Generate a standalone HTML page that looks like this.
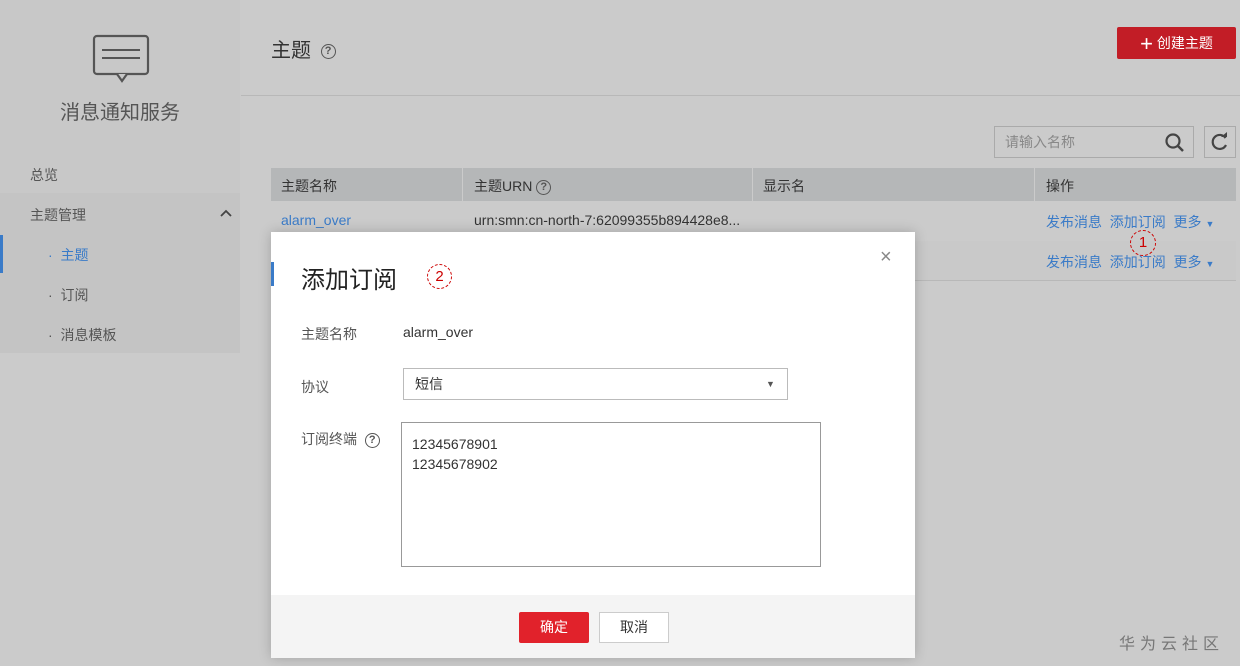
<!DOCTYPE html>
<html><head><meta charset="utf-8"><style>
*{margin:0;padding:0;box-sizing:border-box}
body{width:1240px;height:666px;overflow:hidden;background:#cbcbcb;font-family:"Liberation Sans","Noto Sans CJK SC",sans-serif;font-size:14px;color:#333;position:relative}
.a{position:absolute}
.blue{color:#3a7bc8}
.q{display:inline-block;width:15px;height:15px;border:1.6px solid #555;border-radius:50%;font-size:11px;line-height:12px;text-align:center;font-weight:bold;color:#555;vertical-align:middle}
</style></head><body>
<div class="a" style="left:0;top:0;width:240px;height:193px;background:#c8c8c8"></div>
<div class="a" style="left:0;top:193px;width:240px;height:160px;background:#c4c4c4"></div>
<svg class="a" style="left:92px;top:34px" width="58" height="50"><rect x="2" y="2" width="54" height="38" rx="3" fill="none" stroke="#555" stroke-width="2.2"/><path d="M10 16H48M10 24H48" stroke="#555" stroke-width="2"/><path d="M25 40L30 47L35 40" fill="#c8c8c8" stroke="#555" stroke-width="2.2"/></svg>
<div class="a" style="left:60px;top:96px;font-size:20px;color:#555">消息通知服务</div>
<div class="a" style="left:30px;top:165px;color:#555">总览</div>
<div class="a" style="left:30px;top:205px;color:#555">主题管理</div>
<svg class="a" style="left:219px;top:208px" width="14" height="10"><path d="M2 8L7 3L12 8" fill="none" stroke="#444" stroke-width="1.8"/></svg>
<div class="a" style="left:0;top:235px;width:3px;height:38px;background:#3a7bc8"></div>
<div class="a blue" style="left:48px;top:245px">·&nbsp; 主题</div>
<div class="a" style="left:48px;top:285px;color:#555">·&nbsp; 订阅</div>
<div class="a" style="left:48px;top:325px;color:#555">·&nbsp; 消息模板</div>

<div class="a" style="left:271px;top:34px;font-size:20px;color:#333">主题 <span class="q" style="margin-left:4px">?</span></div>
<div class="a" style="left:1117px;top:27px;width:119px;height:32px;background:#c21d26;color:#fff;font-size:14px;line-height:32px;text-align:center;border-radius:2px"><span style="font-size:22px;vertical-align:-3px">+</span> 创建主题</div>
<div class="a" style="left:241px;top:95px;width:999px;height:1px;background:#b8b8b8"></div>
<div class="a" style="left:994px;top:126px;width:200px;height:32px;border:1px solid #aaa;background:#cbcbcb;color:#888;line-height:30px;padding-left:10px">请输入名称</div>
<svg class="a" style="left:1164px;top:132px" width="22" height="22"><circle cx="9" cy="9" r="6.5" fill="none" stroke="#444" stroke-width="2.2"/><path d="M14 14L19 19" stroke="#444" stroke-width="2.5"/></svg>
<div class="a" style="left:1204px;top:126px;width:32px;height:32px;border:1px solid #aaa"></div>
<svg class="a" style="left:1209px;top:131px" width="22" height="22"><path d="M16.5 7A7 7 0 1 0 17 14" fill="none" stroke="#444" stroke-width="2.2"/><path d="M12 6L18 6L18 1Z" fill="#444"/></svg>
<div class="a" style="left:271px;top:168px;width:965px;height:33px;background:#b5b7b8"></div>
<div class="a" style="left:462px;top:168px;width:1px;height:33px;background:#cbcbcb"></div>
<div class="a" style="left:752px;top:168px;width:1px;height:33px;background:#cbcbcb"></div>
<div class="a" style="left:1034px;top:168px;width:1px;height:33px;background:#cbcbcb"></div>
<div class="a" style="left:281px;top:176px">主题名称</div>
<div class="a" style="left:474px;top:176px">主题URN <span class="q">?</span></div>
<div class="a" style="left:763px;top:176px">显示名</div>
<div class="a" style="left:1046px;top:176px">操作</div>
<div class="a" style="left:271px;top:241px;width:965px;height:40px;background:#c9c9c9;border-bottom:1px solid #b8b8b8"></div>
<div class="a blue" style="left:281px;top:212px">alarm_over</div>
<div class="a" style="left:474px;top:212px">urn:smn:cn-north-7:62099355b894428e8...</div>
<div class="a blue" style="left:1046px;top:212px">发布消息 &nbsp;添加订阅 &nbsp;更多 <span style="font-size:9px">▼</span></div>
<div class="a blue" style="left:1046px;top:252px">发布消息 &nbsp;添加订阅 &nbsp;更多 <span style="font-size:9px">▼</span></div>
<div class="a" style="left:1130px;top:230px;width:26px;height:26px;border:1px dashed #c00;border-radius:50%;color:#c00;text-align:center;line-height:24px;font-size:15px">1</div>

<div class="a" style="left:271px;top:232px;width:644px;height:426px;background:#fff;box-shadow:0 0 12px rgba(0,0,0,.2)">
<div class="a" style="left:0;top:30px;width:3px;height:24px;background:#3a7bc8"></div>
<div class="a" style="left:30px;top:28px;font-size:24px;color:#222">添加订阅</div>
<div class="a" style="left:156px;top:32px;width:25px;height:25px;border:1px dashed #c00;border-radius:50%;color:#c00;text-align:center;line-height:23px;font-size:15px">2</div>
<div class="a" style="left:609px;top:14px;font-size:20px;color:#888">×</div>
<div class="a" style="left:30px;top:92px;color:#555">主题名称</div>
<div class="a" style="left:132px;top:92px">alarm_over</div>
<div class="a" style="left:30px;top:145px;color:#555">协议</div>
<div class="a" style="left:132px;top:136px;width:385px;height:32px;border:1px solid #bbb;line-height:30px;padding-left:11px">短信</div>
<div class="a" style="left:495px;top:147px;font-size:9px;color:#555">▼</div>
<div class="a" style="left:30px;top:197px;color:#555">订阅终端 &nbsp;<span class="q">?</span></div>
<div class="a" style="left:130px;top:190px;width:420px;height:145px;border:1px solid #999;padding:11px 10px;line-height:20px">12345678901<br>12345678902</div>
<div class="a" style="left:0;top:363px;width:644px;height:63px;background:#f4f4f4"></div>
<div class="a" style="left:248px;top:380px;width:70px;height:31px;background:#e1222b;color:#fff;text-align:center;line-height:31px;border-radius:2px">确定</div>
<div class="a" style="left:328px;top:380px;width:70px;height:31px;background:#fff;border:1px solid #ccc;text-align:center;line-height:29px">取消</div>
</div>
<div class="a" style="left:1119px;top:630px;font-size:16px;color:#777;letter-spacing:5px">华为云社区</div>
</body></html>
